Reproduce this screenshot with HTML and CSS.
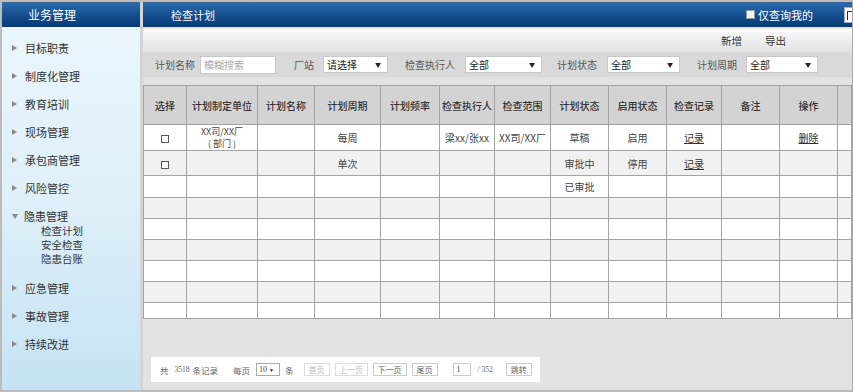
FILE: index.html
```html
<!DOCTYPE html>
<html lang="zh">
<head>
<meta charset="utf-8">
<link rel="stylesheet" href="styles.css">
</head>
<body>
<div class="app">
  <aside class="sidebar">
    <div class="side-head">业务管理</div>
    <ul class="menu">
      <li class="mi"><span class="tri"></span>目标职责</li>
      <li class="mi"><span class="tri"></span>制度化管理</li>
      <li class="mi"><span class="tri"></span>教育培训</li>
      <li class="mi"><span class="tri"></span>现场管理</li>
      <li class="mi"><span class="tri"></span>承包商管理</li>
      <li class="mi"><span class="tri"></span>风险管控</li>
      <li class="mi open"><span class="tri down"></span>隐患管理</li>
      <li class="sub">检查计划</li>
      <li class="sub">安全检查</li>
      <li class="sub last">隐患台账</li>
      <li class="mi"><span class="tri"></span>应急管理</li>
      <li class="mi"><span class="tri"></span>事故管理</li>
      <li class="mi"><span class="tri"></span>持续改进</li>
    </ul>
  </aside>
  <main class="main">
    <div class="main-head">
      <span class="title">检查计划</span>
      <label class="mine"><span class="cbox"></span>仅查询我的</label>
      <span class="head-input"></span>
    </div>
    <div class="toolbar">
      <span class="tbtn">新增</span>
      <span class="tbtn">导出</span>
    </div>
    <div class="filters">
      <span class="flabel l1">计划名称</span>
      <span class="finput">模糊搜索</span>
      <span class="flabel l2">厂站</span>
      <span class="fselect s1">请选择<i>▼</i></span>
      <span class="flabel l3">检查执行人</span>
      <span class="fselect s2">全部<i>▼</i></span>
      <span class="flabel l4">计划状态</span>
      <span class="fselect s3">全部<i>▼</i></span>
      <span class="flabel l5">计划周期</span>
      <span class="fselect s4">全部<i>▼</i></span>
    </div>
    <table class="grid">
      <colgroup>
        <col style="width:43px"><col style="width:71px"><col style="width:57px"><col style="width:66px">
        <col style="width:59px"><col style="width:55px"><col style="width:56px"><col style="width:58px">
        <col style="width:58px"><col style="width:55px"><col style="width:58px"><col style="width:58px">
        <col style="width:14px">
      </colgroup>
      <thead>
        <tr class="hrow">
          <th>选择</th><th>计划制定单位</th><th>计划名称</th><th>计划周期</th><th>计划频率</th><th>检查执行人</th><th>检查范围</th><th>计划状态</th><th>启用状态</th><th>检查记录</th><th>备注</th><th>操作</th><th></th>
        </tr>
      </thead>
      <tbody>
        <tr class="r1">
          <td><span class="chk"></span></td><td><div class="two">XX司/XX厂</div><div class="two">( 部门 )</div></td><td></td><td>每周</td><td></td><td>梁xx/张xx</td><td>XX司/XX厂</td><td>草稿</td><td>启用</td><td><a class="lnk">记录</a></td><td></td><td><a class="lnk">删除</a></td><td></td>
        </tr>
        <tr class="r2 alt">
          <td><span class="chk"></span></td><td></td><td></td><td>单次</td><td></td><td></td><td></td><td>审批中</td><td>停用</td><td><a class="lnk">记录</a></td><td></td><td></td><td></td>
        </tr>
        <tr class="r3">
          <td></td><td></td><td></td><td></td><td></td><td></td><td></td><td>已审批</td><td></td><td></td><td></td><td></td><td></td>
        </tr>
        <tr class="rn alt"><td></td><td></td><td></td><td></td><td></td><td></td><td></td><td></td><td></td><td></td><td></td><td></td><td></td></tr>
        <tr class="rn"><td></td><td></td><td></td><td></td><td></td><td></td><td></td><td></td><td></td><td></td><td></td><td></td><td></td></tr>
        <tr class="rn alt"><td></td><td></td><td></td><td></td><td></td><td></td><td></td><td></td><td></td><td></td><td></td><td></td><td></td></tr>
        <tr class="rn"><td></td><td></td><td></td><td></td><td></td><td></td><td></td><td></td><td></td><td></td><td></td><td></td><td></td></tr>
        <tr class="rn alt"><td></td><td></td><td></td><td></td><td></td><td></td><td></td><td></td><td></td><td></td><td></td><td></td><td></td></tr>
        <tr class="rl"><td></td><td></td><td></td><td></td><td></td><td></td><td></td><td></td><td></td><td></td><td></td><td></td><td></td></tr>
      </tbody>
    </table>
    <div class="pager">
      <span class="p-gong">共</span>
      <span class="p-num">3518</span>
      <span class="p-txt">条记录</span>
      <span class="p-txt p-per">每页</span>
      <span class="p-sel">10 <i>▼</i></span>
      <span class="p-txt p-tiao">条</span>
      <span class="p-btn b1">首页</span>
      <span class="p-btn b2">上一页</span>
      <span class="p-btn b3">下一页</span>
      <span class="p-btn b4">尾页</span>
      <span class="p-in">1</span>
      <span class="p-total">/ 352</span>
      <span class="p-btn b5">跳转</span>
    </div>
  </main>
</div>
</body>
</html>
```
FILE: styles.css
```css
* { box-sizing: border-box; }
html, body { margin: 0; padding: 0; }
body {
  width: 853px;
  height: 392px;
  overflow: hidden;
  font-family: "Noto Sans CJK SC", "Noto Sans", sans-serif;
  background: #c2c2c2;
}
.app {
  display: flex;
  width: 853px;
  height: 392px;
  padding: 2px 0 2px 2px;
  background: #bcbcbc;
}
.sidebar {
  width: 138px;
  display: flex;
  flex-direction: column;
  background: linear-gradient(to bottom, #ebf7fd 0%, #dff0f9 50%, #c5e3f4 100%);
}
.side-head {
  height: 25px;
  line-height: 25px;
  padding-left: 26px;
  color: #fff;
  font-size: 12px;
  background: linear-gradient(to bottom, #2e6db2 0%, #15508f 50%, #053a78 100%);
}
.menu {
  list-style: none;
  margin: 0;
  padding: 12px 0 0 0;
  font-size: 11px;
  color: #333;
}
.mi {
  height: 28px;
  line-height: 18px;
  display: flex;
  align-items: flex-start;
  padding-left: 10px;
}
.mi.open { height: 17px; }
.tri {
  width: 0;
  height: 0;
  border-top: 3.5px solid transparent;
  border-bottom: 3.5px solid transparent;
  border-left: 5px solid #8a8a8a;
  margin: 5.5px 8px 0 0;
}
.tri.down {
  border-left: 3.5px solid transparent;
  border-right: 3.5px solid transparent;
  border-top: 5px solid #8a8a8a;
  border-bottom: 0;
  margin: 7px 6px 0 0;
}
.sub {
  height: 14px;
  line-height: 14px;
  padding-left: 39px;
  font-size: 10.5px;
}
.sub.last { height: 27px; }

.main {
  flex: 1;
  display: flex;
  flex-direction: column;
  background: #e2e2e2;
  border-left: 3px solid #d4d4d4;
  border-right: 1px solid #a8a8a8;
  overflow: hidden;
}
.main-head {
  height: 25px;
  display: flex;
  align-items: center;
  padding-left: 28px;
  color: #fff;
  font-size: 11px;
  background: linear-gradient(to bottom, #2e6db2 0%, #15508f 50%, #053a78 100%);
}
.title { flex: 1; }
.mine {
  display: flex;
  align-items: center;
  font-size: 11px;
  margin-right: 31px;
}
.cbox {
  width: 9px;
  height: 9px;
  background: #f4f4f4;
  border: 1px solid #999;
  margin-right: 3px;
}
.head-input {
  width: 8px;
  height: 16px;
  background: #fff;
  border: 1px solid #aaa;
  border-right: 0;
  position: relative;
}
.head-input::after {
  content: "";
  position: absolute;
  left: 2px;
  top: 3px;
  width: 6px;
  height: 8px;
  border-top: 1px solid #333;
  border-left: 1px solid #333;
}
.toolbar {
  height: 23px;
  margin-top: 2px;
  display: flex;
  align-items: center;
  justify-content: flex-end;
  padding-right: 66px;
  font-size: 10.5px;
  color: #333;
  background: linear-gradient(to bottom, #fbfbfb 0%, #ececec 60%, #e2e2e2 100%);
}
.tbtn { margin-left: 23px; }
.filters {
  height: 25px;
  display: flex;
  align-items: center;
  background: #d9d9d9;
  font-size: 10px;
  color: #555;
}
.flabel { display: inline-block; white-space: nowrap; }
.l1 { margin-left: 12px; width: 45px; }
.l2 { margin-left: 18px; width: 29px; }
.l3 { margin-left: 17px; width: 60px; }
.l4 { margin-left: 15px; width: 50px; }
.l5 { margin-left: 17px; width: 49px; }
.finput {
  width: 76px;
  height: 18px;
  line-height: 16px;
  background: #fff;
  border: 1px solid #c8c8c8;
  color: #aaa;
  padding-left: 3px;
}
.fselect {
  height: 17px;
  line-height: 15px;
  background: #fff;
  border: 1px solid #c8c8c8;
  color: #222;
  padding-left: 3px;
  display: flex;
  justify-content: space-between;
}
.fselect i {
  font-style: normal;
  font-size: 6px;
  color: #222;
  margin-right: 6px;
}
.s1 { width: 65px; }
.s2 { width: 77px; }
.s3 { width: 73px; }
.s4 { width: 72px; }

.grid {
  margin-top: 8px;
  margin-left: 0;
  width: 708px;
  table-layout: fixed;
  border-collapse: collapse;
  font-size: 10px;
  color: #444;
}
.grid th, .grid td {
  border: 1px solid #a3a3a3;
  text-align: center;
  padding: 0;
  font-weight: normal;
  white-space: nowrap;
  overflow: hidden;
}
.grid th {
  background: #d3d3d3;
  color: #333;
  font-weight: 500;
}
.hrow { height: 39px; }
.r1 { height: 26px; }
.r2 { height: 25px; }
.r3 { height: 22px; }
.rn { height: 21px; }
.rl { height: 16px; }
.grid tr { background: #fff; }
.grid tr.alt { background: #f1f1f1; }
.two { line-height: 12px; height: 12px; font-size: 9px; }
.chk {
  display: inline-block;
  width: 8px;
  height: 8px;
  border: 1px solid #555;
  background: #fff;
  vertical-align: middle;
}
.lnk { color: #333; text-decoration: underline; }

.pager {
  margin-top: 38px;
  margin-left: 8px;
  width: 389px;
  height: 25px;
  background: #fff;
  display: flex;
  align-items: center;
  font-size: 8.5px;
  color: #666;
  white-space: nowrap;
}
.p-gong { margin-left: 9px; }
.p-num { margin-left: 6px; font-size: 7.5px; font-family: "Liberation Serif", serif; }
.p-txt { margin-left: 3px; }
.p-per { margin-left: 15px; }
.p-sel {
  margin-left: 6px;
  width: 24px;
  height: 13px;
  line-height: 11px;
  border: 1px solid #aaa;
  font-size: 8px;
  font-family: "Liberation Serif", serif;
  padding-left: 2px;
  color: #444;
}
.p-sel i { font-style: normal; font-size: 5px; color: #222; }
.p-tiao { margin-left: 5px; }
.p-btn {
  height: 13px;
  line-height: 11px;
  border: 1px solid #ddd;
  padding: 0;
  text-align: center;
  color: #bbb;
  background: #fff;
  font-size: 8px;
  white-space: nowrap;
}
.b1 { margin-left: 10px; width: 26px; }
.b2 { margin-left: 5px; width: 33px; }
.b3 { margin-left: 5px; width: 34px; color: #666; border-color: #ccc; }
.b4 { margin-left: 5px; width: 26px; color: #666; border-color: #ccc; }
.b5 { margin-left: 13px; width: 26px; color: #666; border-color: #ccc; }
.p-in {
  margin-left: 15px;
  width: 18px;
  height: 13px;
  line-height: 11px;
  border: 1px solid #ccc;
  font-size: 8px;
  font-family: "Liberation Serif", serif;
  padding-left: 3px;
  color: #444;
}
.p-total { margin-left: 7px; font-size: 7.5px; font-family: "Liberation Serif", serif; }
```
